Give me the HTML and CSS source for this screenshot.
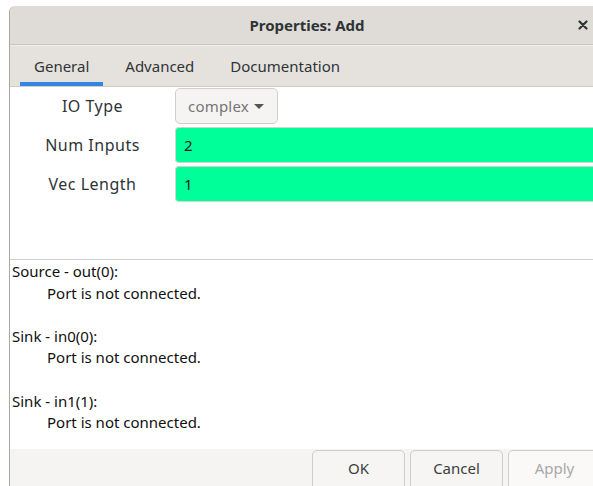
FILE: index.html
```html
<!DOCTYPE html>
<html lang="en">
<head>
<meta charset="utf-8">
<title>Properties: Add</title>
<link rel="stylesheet" href="styles.css">
</head>
<body>
<div class="window">
  <header class="titlebar">
    <span></span>
    <h1 class="title">Properties: Add</h1>
    <button class="close" aria-label="Close">
      <svg width="10" height="10" viewBox="0 0 10 10"><path d="M1.5 1.5 L8.5 8.5 M8.5 1.5 L1.5 8.5" stroke="#2e3436" stroke-width="2.2" stroke-linecap="round"/></svg>
    </button>
  </header>
  <nav class="tabs">
    <div class="tab active">General</div>
    <div class="tab">Advanced</div>
    <div class="tab">Documentation</div>
  </nav>
  <section class="params">
    <label class="plabel">IO Type</label>
    <div class="pvalue"><span class="combo">complex <span class="caret"></span></span></div>
    <label class="plabel">Num Inputs</label>
    <div class="pvalue"><span class="entry">2</span></div>
    <label class="plabel">Vec Length</label>
    <div class="pvalue"><span class="entry">1</span></div>
  </section>
  <section class="ports">
    <p class="port">Source - out(0):</p>
    <p class="msg">Port is not connected.</p>
    <p class="blank"></p>
    <p class="port">Sink - in0(0):</p>
    <p class="msg">Port is not connected.</p>
    <p class="blank"></p>
    <p class="port">Sink - in1(1):</p>
    <p class="msg">Port is not connected.</p>
  </section>
  <footer class="actions">
    <button class="btn">OK</button>
    <button class="btn">Cancel</button>
    <button class="btn disabled">Apply</button>
  </footer>
</div>
</body>
</html>
```
FILE: styles.css
```css
html, body {
  margin: 0;
  padding: 0;
  background: #ffffff;
  width: 593px;
  height: 486px;
  overflow: hidden;
}

body {
  font-family: "Noto Sans", "Open Sans", sans-serif;
  color: #2e3436;
  padding-top: 6px;
  padding-left: 9px;
  box-sizing: border-box;
}

.window {
  width: 594px;
  height: 480px;
  border-left: 1px solid #aaa7a4;
  border-top-left-radius: 6px;
  overflow: hidden;
  display: flex;
  flex-direction: column;
  background: #ffffff;
}

.titlebar {
  height: 38px;
  flex: none;
  background: #dfdcd8;
  border-bottom: 1px solid #c7c3bf;
  display: grid;
  grid-template-columns: 1fr auto 1fr;
  align-items: center;
}

.title {
  margin: 0;
  font-size: 15px;
  font-weight: bold;
  color: #2e3436;
}

.close {
  justify-self: end;
  margin-right: 16px;
  border: none;
  background: none;
  padding: 0;
  display: flex;
}

.tabs {
  height: 42px;
  flex: none;
  box-sizing: border-box;
  background: #e5e2de;
  border-top: 1px solid #f0eeec;
  border-bottom: 1px solid #cfcbc7;
  display: flex;
  padding-left: 10px;
  gap: 8px;
}

.tab {
  padding: 0 14px;
  display: flex;
  align-items: center;
  font-size: 15px;
  color: #2e3436;
  border-bottom: 4px solid transparent;
  padding-top: 4px;
}

.tab.active {
  border-bottom-color: #3584e4;
}

.params {
  flex: none;
  display: grid;
  grid-template-columns: 165px 1fr;
  grid-auto-rows: 36px;
  row-gap: 3px;
  padding-top: 1px;
  height: 173px;
  box-sizing: border-box;
  border-bottom: 1px solid #d3d0cc;
}

.plabel {
  display: flex;
  align-items: center;
  justify-content: center;
  font-size: 16px;
  color: #2e3436;
  letter-spacing: 0.5px;
}

.pvalue {
  display: flex;
  align-items: stretch;
}

.combo {
  display: flex;
  align-items: center;
  gap: 5px;
  padding: 0 13px 0 12px;
  border: 1px solid #d1cdc9;
  border-radius: 5px;
  background: #f5f4f2;
  color: #757575;
  font-size: 15px;
  letter-spacing: 0.2px;
}

.caret {
  width: 0;
  height: 0;
  border-left: 5px solid transparent;
  border-right: 5px solid transparent;
  border-top: 5px solid #555;
}

.entry {
  flex: 1;
  display: flex;
  align-items: center;
  padding-left: 8px;
  background: #00ff99;
  border: 1px solid #d6d3cf;
  border-right: none;
  border-radius: 4px 0 0 4px;
  font-size: 15px;
  color: #1c1c1c;
}

.ports {
  flex: 1;
  padding: 1px 0 0 2px;
  font-size: 15px;
  line-height: 21.6px;
  color: #101010;
}

.ports p {
  margin: 0;
  height: 21.6px;
}

.ports .msg {
  padding-left: 35px;
}

.actions {
  flex: none;
  height: 36px;
  background: #f5f4f2;
  display: flex;
  justify-content: flex-end;
  gap: 5px;
  padding-right: 3px;
  padding-top: 1px;
}

.btn {
  width: 93px;
  height: 40px;
  border: 1px solid #d0ccc8;
  border-radius: 5px;
  background: #f6f5f4;
  font-family: "Noto Sans", "Open Sans", sans-serif;
  font-size: 15px;
  color: #3a3f41;
  padding: 0 0 4px 0;
}

.btn.disabled {
  color: #a8a8a8;
  background: #faf9f8;
}
```
